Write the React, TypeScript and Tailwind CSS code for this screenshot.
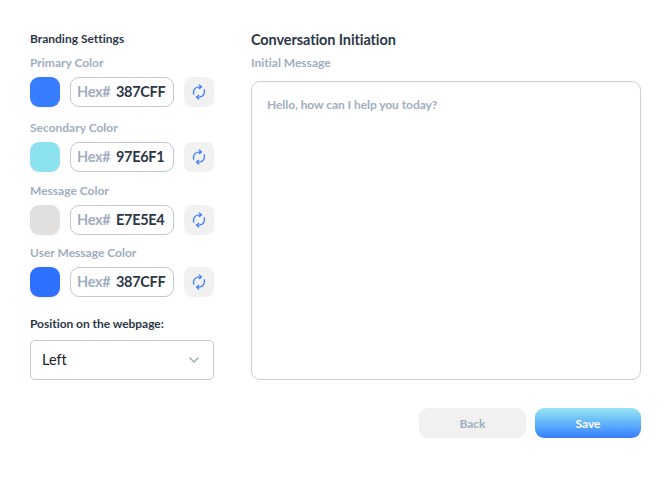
import React from "react";

function SyncIcon() {
  return (
    <svg width="18" height="18" viewBox="0 0 18 18" fill="none" stroke="#387CFF" strokeWidth="1.25" strokeLinecap="round" strokeLinejoin="round">
      <path d="M3.8 11.4C2.6 7.6 5 4.2 8.4 4H11" />
      <path d="M9.3 1.9L11.4 4L9.3 5.7" />
      <path d="M14.2 6.6C15.4 10.4 13 13.8 9.6 14H7" />
      <path d="M8.7 16.1L6.6 14L8.7 12.3" />
    </svg>
  );
}

type ColorFieldProps = { label: string; value: string; swatch: string; spacing: string };

function ColorField({ label, value, swatch, spacing }: ColorFieldProps) {
  return (
    <div className={spacing}>
      <div className="h-4 text-[12px] leading-4 font-bold text-[#A0AEC0]">{label}</div>
      <div className="mt-1.5 flex h-[30px] gap-2.5">
        <div className={`w-[30px] rounded-[9px] shadow-[0_2px_4px_rgba(0,0,0,0.03)] ${swatch}`} />
        <div className="flex w-[104px] items-center rounded-[9px] border border-[#BFC8D8] pl-1.5 text-[14.5px] leading-5 font-bold tracking-[-0.3px] whitespace-nowrap">
          <span className="w-[39px] text-[#A0AEC0]">Hex#</span>
          <span className="text-[#2D3748]">{value}</span>
        </div>
        <button className="flex w-[30px] items-center justify-center rounded-[8px] bg-[#F1F1F1]" aria-label="Reset">
          <SyncIcon />
        </button>
      </div>
    </div>
  );
}

export default function App() {
  return (
    <div className="h-[478px] w-[671px] bg-white pt-[30px] pr-[30px] pl-[30px] font-['Lato',sans-serif] text-[#2D3748] [font-variant-ligatures:none]">
      <div className="flex h-[350px] gap-[37px]">
        <section className="w-[184px]">
          <h2 className="text-[12px] leading-[18px] font-bold">Branding Settings</h2>
          <ColorField label="Primary Color" value="387CFF" swatch="bg-[#387CFF]" spacing="mt-[7px]" />
          <ColorField label="Secondary Color" value="97E6F1" swatch="bg-[#8CE3EF]" spacing="mt-[13px]" />
          <ColorField label="Message Color" value="E7E5E4" swatch="bg-[#E1E0DF]" spacing="mt-[11px]" />
          <ColorField label="User Message Color" value="387CFF" swatch="bg-[#2E71FF]" spacing="mt-2.5" />
          <div className="mt-[18px] text-[12px] leading-[18px] font-bold tracking-[-0.04px]">Position on the webpage:</div>
          <div className="mt-[7px] flex h-10 items-center justify-between rounded-[5px] border border-[#BFC8D8] pr-3.5 pl-[11px] text-[14.5px] leading-5 text-[#1A202C]">
            <span>Left</span>
            <svg width="10" height="6" viewBox="0 0 10 6" fill="none" stroke="#A0AEC0" strokeWidth="1.5">
              <path d="M0.5 0.5L5 5L9.5 0.5" />
            </svg>
          </div>
        </section>
        <section className="flex flex-1 flex-col">
          <h2 className="text-[14.5px] leading-5 font-bold tracking-[-0.1px]">Conversation Initiation</h2>
          <div className="mt-[5px] text-[12px] leading-4 font-bold text-[#A0AEC0]">Initial Message</div>
          <div className="mt-2.5 flex-1 rounded-[9px] border border-[#CBD0DD] px-[15px] pt-[15px] text-[12px] leading-4 font-bold tracking-[-0.06px] text-[#A0AEC0]">
            Hello, how can I help you today?
          </div>
        </section>
      </div>
      <div className="mt-7 flex justify-end gap-[9px] text-[12px] leading-[18px] font-bold">
        <button className="h-[30px] w-[107px] rounded-[9px] bg-[#F1F1F1] pt-px text-[#A0AEC0]">Back</button>
        <button className="h-[30px] w-[106px] rounded-[9px] bg-linear-to-b from-[#97E6F1] to-[#387CFF] pt-px text-white">Save</button>
      </div>
    </div>
  );
}
